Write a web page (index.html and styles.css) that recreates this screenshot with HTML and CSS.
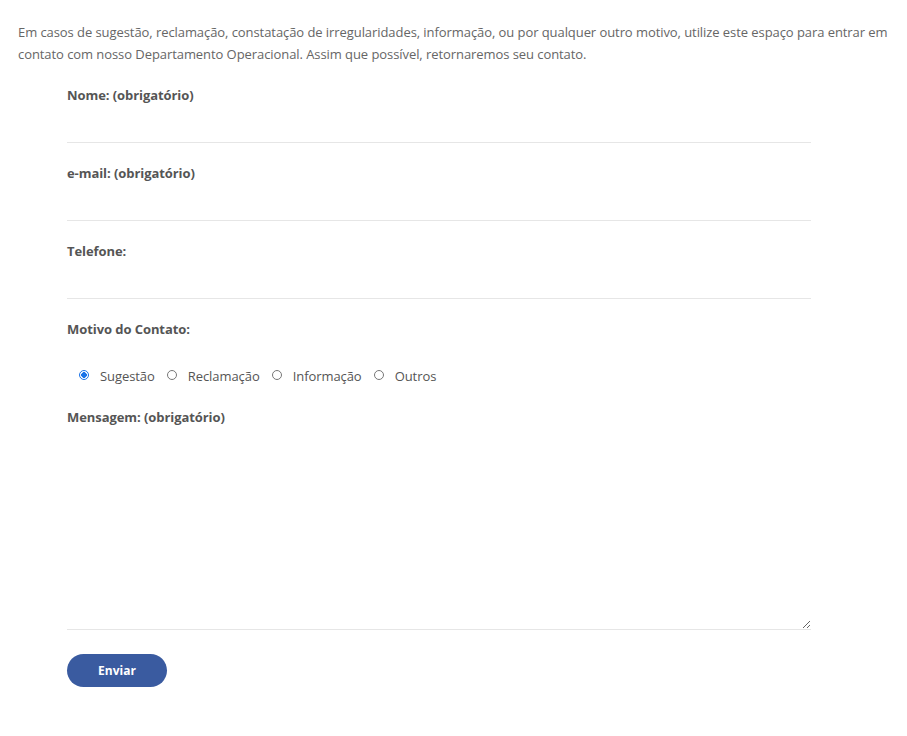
FILE: index.html
```html
<!DOCTYPE html>
<html lang="pt-BR">
<head>
<meta charset="utf-8">
<title>Contato</title>
<link rel="stylesheet" href="styles.css">
</head>
<body>
<div class="page">
  <p class="intro">Em casos de sugestão, reclamação, constatação de irregularidades, informação, ou por qualquer outro motivo, utilize este espaço para entrar em contato com nosso Departamento Operacional. Assim que possível, retornaremos seu contato.</p>
  <form class="form">
    <div class="field">
      <label class="label">Nome: (obrigatório)</label>
      <input class="input" type="text">
    </div>
    <div class="field">
      <label class="label">e-mail: (obrigatório)</label>
      <input class="input" type="text">
    </div>
    <div class="field">
      <label class="label">Telefone:</label>
      <input class="input" type="text">
    </div>
    <div class="field">
      <label class="label">Motivo do Contato:</label>
      <div class="radios">
        <label class="radio"><input type="radio" name="m" checked><span>Sugestão</span></label>
        <label class="radio"><input type="radio" name="m"><span>Reclamação</span></label>
        <label class="radio"><input type="radio" name="m"><span>Informação</span></label>
        <label class="radio"><input type="radio" name="m"><span>Outros</span></label>
      </div>
    </div>
    <div class="field">
      <label class="label">Mensagem: (obrigatório)</label>
      <textarea class="textarea"></textarea>
    </div>
    <button class="btn" type="button">Enviar</button>
  </form>
</div>
</body>
</html>
```
FILE: styles.css
```css
html, body {
  margin: 0;
  padding: 0;
  background: #fff;
}
body {
  font-family: "Open Sans", "Liberation Sans", sans-serif;
  font-size: 13px;
  color: #666;
  letter-spacing: -0.07px;
}
.page {
  padding: 21px 18px 0 18px;
}
.intro {
  margin: 0;
  line-height: 22px;
  color: #666;
}
.form {
  width: 744px;
  margin: 21px 0 0 49px;
  display: flex;
  flex-direction: column;
}
.field {
  display: flex;
  flex-direction: column;
  margin-bottom: 21px;
}
.label {
  font-weight: 700;
  color: #555;
  line-height: 19px;
}
.input {
  height: 38px;
  box-sizing: border-box;
  border: 0;
  border-bottom: 1px solid #e6e6e6;
  outline: none;
  background: transparent;
  font: inherit;
  padding: 0;
}
.radios {
  display: flex;
  align-items: center;
  gap: 12px;
  padding: 27px 0 1px 12px;
  line-height: 20px;
}
.radio {
  display: flex;
  align-items: center;
  gap: 11px;
  color: #555;
}
.radio input {
  appearance: none;
  -webkit-appearance: none;
  margin: 0;
  width: 10px;
  height: 10px;
  border: 1px solid #777;
  border-radius: 50%;
  box-sizing: border-box;
  position: relative;
  top: -1px;
}
.radio input:checked {
  border-color: #1a73e8;
  background: radial-gradient(circle, #1a73e8 0 2.6px, #fff 3px);
}
.textarea {
  height: 203px;
  box-sizing: border-box;
  border: 0;
  border-bottom: 1px solid #e6e6e6;
  outline: none;
  resize: vertical;
  font: inherit;
  padding: 0;
  margin: 0;
  display: block;
}
.field:last-of-type {
  margin-bottom: 24px;
}
.btn {
  align-self: flex-start;
  width: 100px;
  height: 33px;
  border: 0;
  border-radius: 17px;
  background: #3a5ba0;
  color: #fff;
  font-family: inherit;
  font-size: 12px;
  font-weight: 700;
  cursor: pointer;
}
```
